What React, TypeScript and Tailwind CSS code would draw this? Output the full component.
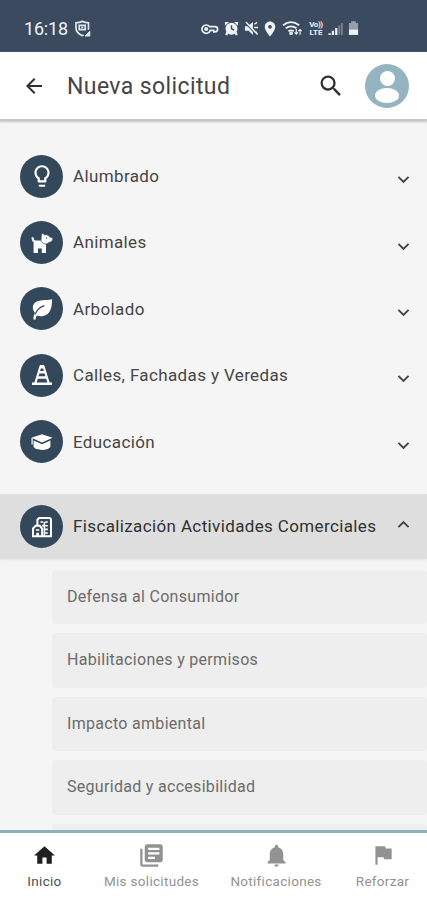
import React from 'react';
import {
  MdArrowBack, MdSearch, MdExpandMore, MdExpandLess, MdHome, MdLibraryBooks,
  MdNotifications, MdFlag, MdLightbulbOutline, MdLocationOn,
} from 'react-icons/md';

const Dog = () => (
  <svg viewBox="0 0 22 22" className="size-[22px]" fill="white">
    <path d="M.6 5.2c1.4-.4 2.2.6 2.5 2 .2.8.7 1.2 1.6 1.2h6.5L15 12.6V21h-4.2v-4.6H7V21H2.6V10.4C1.2 9.4.5 7.5.6 5.2Z" />
    <path d="M10 8.2 10.6 1c1.3.2 2.2.9 2.8 1.9 1.6-.4 3.3-.1 4.5.9l.8 1.3 2.9.5c.6 3.4-1.1 4.5-3.7 4.8-1.1 1.3-2.7 1.8-4.2 1.4-2.1-.4-3.7-1.9-3.7-3.6Z" stroke="#34485c" strokeWidth=".7" />
    <circle cx="15.6" cy="6" r=".65" fill="#34485c" />
  </svg>
);

const Leaf = () => (
  <svg viewBox="0 0 22 22" className="size-[22px]" fill="white">
    <path d="M21 1.2c.3 8.1-1.6 15.3-8.9 16.8-2.2.5-4.5.2-6.3-.6-.8 1.3-1.1 2.4-1.1 4H2.4c0-2.8.6-4.8 1.6-6.5C1.2 11.2 1 7 4.2 4.4 8 1.4 14.3 2.6 21 1.2Z" />
    <path d="M4.2 16.2c1.8-4.4 4.8-7.3 9.2-8.6" stroke="#34485c" strokeWidth="1.1" fill="none" />
  </svg>
);

const Cone = () => (
  <svg viewBox="0 0 22 22" className="size-[22px]" fill="white">
    <path d="M9.6 1h2.8c.5 0 .8.3 1 .8L18.6 18.6H21V21H1v-2.4h2.4L8.6 1.8c.2-.5.5-.8 1-.8Z" />
    <path d="M9.8 4.6h2.4l.7 2.4H9.1ZM8.4 9.4h5.2l.9 2.9h-7ZM6.8 14.7h8.4l1.2 3.9H5.6Z" fill="#34485c" />
  </svg>
);

const Cap = () => (
  <svg viewBox="0 0 24 22" className="h-[22px] w-6" fill="white">
    <path d="M12 3.2 22.6 6.8 12 11.6 1.4 6.8Z" />
    <path d="M3.6 9.4 12 13.2l8.4-3.8v6.1c-.6 2-4.2 3.4-8.4 3.4s-7.8-1.4-8.4-3.4Z" />
    <path d="M2.1 7v6.4" stroke="white" strokeWidth="1.2" />
  </svg>
);

const Building = () => (
  <svg viewBox="0 0 22 22" className="size-[22px]" fill="none" stroke="white" strokeWidth="2">
    <path d="M6.4 10V3.7L8.2 2h10.6l1.2 1.2v17H2V12.5l2.7-2.7h4.1l2.3 2.7v7.7" />
    <path d="M9.5 6h2.6M14.2 6h2.6M14.2 9.8h2.6M14.2 13.4h2.6M14.2 17h2.6M11 9.6h2M4.9 14h3.4M13.4 6v14" strokeWidth="1.6" />
    <path d="M6.6 16.8V20" strokeWidth="2.8" />
  </svg>
);

const Shield = () => (
  <svg viewBox="0 0 18 18" className="ml-[6px] size-[18px]" fill="none" stroke="#dfe7ef" strokeWidth="1.7">
    <path d="M9.5 14.8q-.6.5-1.2.8Q2 12.8 2 8V2.8Q5.5 2.6 8.3 1.4q3 1.2 6.2 1.4v7" />
    <path d="M5.2 5.4h6v4.3h-6Zm2 2.1h2" />
    <path d="m11 16 4.8-4.8V16Z" fill="#dfe7ef" strokeWidth="1" />
  </svg>
);

const StatusIcons = () => (
  <div className="ml-auto mr-[68px] flex items-center text-[#eef3f8]">
    <svg viewBox="0 0 18 12" className="h-3 w-[18px]" fill="none" stroke="currentColor" strokeWidth="1.7">
      <path d="M8.5 3.6H14a2.6 2.6 0 0 1 0 5.2h-1.2V7.4H9.2A4.2 4.2 0 1 1 8.5 3.6Z" /><circle cx="5.2" cy="6" r="1.2" />
    </svg>
    <svg viewBox="0 0 16 16" className="ml-[5px] size-[15px]" fill="currentColor">
      <path d="M1 1h4.4L1 5Zm9.6 0H15v4Z" /><circle cx="8" cy="8.3" r="6.4" />
      <path d="m3.5 12-1 3m10-3 1 3" stroke="currentColor" strokeWidth="2.4" />
      <path d="M8 4.6V8.4l2.8 1.4" stroke="#3b4a5f" strokeWidth="1.5" fill="none" />
    </svg>
    <svg viewBox="0 0 16 16" className="ml-[5px] size-[15px]" fill="currentColor">
      <path d="M1 5.5h3l5.5-4.5v14L5 10.5H1Z" /><path d="m1 1 13 14" stroke="#3b4a5f" strokeWidth="2.2" />
      <path d="m2 1 12.5 13.5M11 3.5l3-2M11 7h4M11 11l3 1.5" stroke="currentColor" strokeWidth="1.5" />
    </svg>
    <MdLocationOn className="ml-[2px] size-[18px]" />
    <svg viewBox="0 0 22 18" className="ml-[3px] h-[17px] w-[21px]" fill="none" stroke="currentColor" strokeWidth="1.9">
      <path d="M1 5.5q8.5-6.5 17 0M3.8 8.8q5.7-4.2 11.4 0M6.7 12q2.8-2 5.6 0" />
      <circle cx="9.5" cy="14" r="1" fill="currentColor" /><path d="M15 9.5V15m-1.8-1.8L15 15l1.8-1.8M19 15.5V10m-1.8 1.8L19 10l1.8 1.8" strokeWidth="1.2" />
    </svg>
    <div className="ml-[5px] flex w-4 flex-col items-center text-[8px] font-bold leading-[8px]"><span className="h-[8px] tracking-[-0.4px]">Vo))</span><span className="h-[8px]">LTE</span></div>
    <svg viewBox="0 0 16 15" className="ml-[4px] h-[14px] w-[15px]" fill="currentColor">
      <path d="M.5 12H3v2H.5Zm3.6-2.5h2.3V14H4.1Zm3.5-3H10V14H7.6Z" /><path d="M11.1 3.5h2V14h-2ZM14 1h1.8v13H14Z" opacity=".35" />
    </svg>
    <svg viewBox="0 0 12 16" className="ml-[5px] h-[15px] w-[11px]" fill="currentColor">
      <path d="M3.5 0h5v2H11v7H1V2h2.5Z" opacity=".5" /><path d="M1 9h10v6H1Z" />
    </svg>
  </div>
);

const categories = [
  { label: 'Alumbrado', icon: <MdLightbulbOutline className="size-[26px]" /> },
  { label: 'Animales', icon: <Dog /> },
  { label: 'Arbolado', icon: <Leaf /> },
  { label: 'Calles, Fachadas y Veredas', icon: <Cone /> },
  { label: 'Educación', icon: <Cap /> },
];

const services = ['Defensa al Consumidor', 'Habilitaciones y permisos', 'Impacto ambiental', 'Seguridad y accesibilidad', ''];

const RoundIcon = ({ children }: { children: React.ReactNode }) => (
  <span className="flex size-[43px] shrink-0 items-center justify-center rounded-full bg-[#34485c] text-white">{children}</span>
);

export default function App() {
  return (
    <div className="flex h-[900px] w-[427px] flex-col overflow-hidden bg-[#f5f5f5] font-['Roboto',sans-serif] text-[#454545]">
      <div className="flex h-[52px] shrink-0 items-center bg-[#3b4a5f] pl-6 pt-[5px] text-[#eef3f8]">
        <span className="text-[18px] tracking-[-0.2px]">16:18</span>
        <Shield />
        <StatusIcons />
      </div>
      <header className="z-10 flex h-[67px] shrink-0 items-center bg-white pl-[22px] pr-[18px] shadow-[0_2px_2px_1px_#c4c4c4]">
        <MdArrowBack className="size-6 text-[#303030]" />
        <h1 className="ml-[21px] pt-[3px] text-[23px] font-normal tracking-[0.4px]">Nueva solicitud</h1>
        <MdSearch className="ml-auto mr-[20px] size-[28px] text-[#303030]" />
        <span className="flex size-11 flex-col items-center rounded-full bg-[#94b5bf] pt-[7px]">
          <span className="size-[15px] rounded-full bg-white" />
          <span className="mt-[2px] h-[15px] w-[24px] rounded-[50%] bg-white" />
        </span>
      </header>
      <main className="min-h-0 flex-1 overflow-hidden pt-6">
        {categories.map(c => (
          <div key={c.label} className="flex h-[66.4px] items-center pl-5 pr-3">
            <RoundIcon>{c.icon}</RoundIcon>
            <span className="ml-[10px] whitespace-nowrap pt-px text-[17px] tracking-[0.37px]">{c.label}</span>
            <MdExpandMore className="ml-auto mt-[7px] size-[23px]" />
          </div>
        ))}
        <div className="mt-[19px] flex h-[65.5px] items-center bg-[#dedede] pl-5 pr-3 shadow-[0_1px_2px_#e5e5e5]">
          <RoundIcon><Building /></RoundIcon>
          <span className="ml-[10px] whitespace-nowrap pt-px text-[17px] tracking-[0.37px] text-[#303030]">Fiscalización Actividades Comerciales</span>
          <MdExpandLess className="mb-[5px] ml-auto size-[23px]" />
        </div>
        <div className="mt-[10.5px] flex flex-col gap-[9px] pl-[52px]">
          {services.map((s, i) => (
            <div key={i} className="flex h-[54.5px] shrink-0 items-center rounded-[4px] bg-[#eeeeee] pb-px pl-[15px] text-[16px] tracking-[0.3px] text-[#6b6b6b]">{s}</div>
          ))}
        </div>
      </main>
      <nav className="flex h-[70px] shrink-0 border-t-[3px] border-[#8eb0bb] bg-white text-[13.5px] tracking-[0.3px] text-[#929292]">
        <div className="flex w-[89px] flex-col items-center pt-[10px] text-[#505050]"><MdHome className="size-[25px] text-[#202020]" /><span className="mt-[3px]">Inicio</span></div>
        <div className="flex w-[125px] flex-col items-center pt-[9px]"><MdLibraryBooks className="size-[27px]" /><span className="mt-[2px]">Mis solicitudes</span></div>
        <div className="flex w-[124px] flex-col items-center pt-[9px]"><MdNotifications className="size-[27px]" /><span className="mt-[2px]">Notificaciones</span></div>
        <div className="flex w-[89px] flex-col items-center pt-[9px]"><MdFlag className="size-[26px]" /><span className="mt-[3px]">Reforzar</span></div>
      </nav>
    </div>
  );
}
